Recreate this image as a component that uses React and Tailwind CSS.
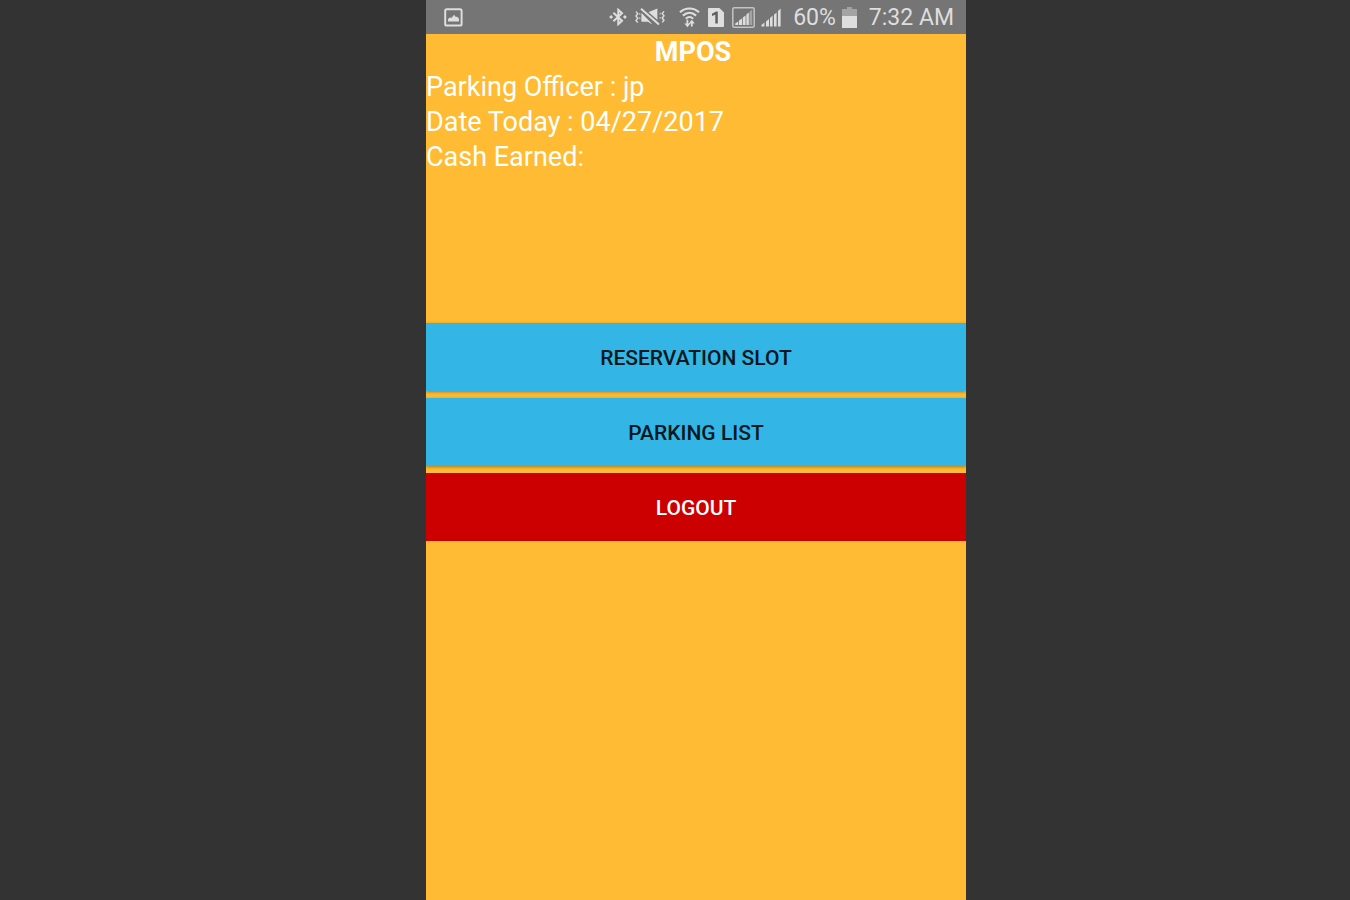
function PictureIcon() {
  return (
    <svg className="h-[19px] w-[19px]" viewBox="0 0 19 19" fill="none" aria-hidden="true">
      <rect x="1.2" y="1.2" width="16.4" height="16.4" rx="1.6" stroke="#dedede" strokeWidth="2" />
      <path d="M4 13.6V11l2.2-1.7 1.2.7 2.7-3.2 1.9 2.4 1-.6 2 2.2v2.8z" fill="#dedede" />
    </svg>
  );
}

function BluetoothIcon() {
  return (
    <svg className="h-[18px] w-[18px]" viewBox="0 0 18 18" fill="none" stroke="#dedede" strokeWidth="2" aria-hidden="true">
      <path d="M4.4 4.8 13 12.8 9.3 16.2V1.8L13 5.2 4.4 13.2" />
      <path d="M.2 9 2.1 7.1 4 9 2.1 10.9zM14 9l1.9-1.9L17.8 9l-1.9 1.9z" fill="#dedede" stroke="none" />
    </svg>
  );
}

function MuteVibrateIcon() {
  return (
    <svg className="h-[18px] w-[30px]" viewBox="0 0 30 18" fill="none" aria-hidden="true">
      <path d="M1 3.6 2.8 5.8 1 8l1.8 2.2L1 12.4l1.8 2.2M29 3.4l-1.8 2.2L29 7.8 27.2 10l1.8 2.2-1.8 2.2" stroke="#dedede" strokeWidth="1.4" />
      <path d="M4.8 5.2v1.6M4.8 9.4V11M25.2 4.8v1.6M25.2 9v1.6" stroke="#dedede" strokeWidth="1" />
      <path d="M6.6 5v8.6h6.2l4.6 2.8z" fill="#dedede" />
      <path d="M12 4.8 22.4.4v12.8z" fill="#dedede" />
      <path d="M7.2 1 24 15.6" stroke="#757575" strokeWidth="3.6" />
      <path d="M6 .8 24 16.6" stroke="#dedede" strokeWidth="2" />
      <path d="M6.6 5.6v8h6.2l4.4 2.6z" fill="#dedede" />
    </svg>
  );
}

function WifiIcon() {
  return (
    <svg className="h-[21px] w-[21px]" viewBox="0 0 21 21" fill="none" stroke="#dedede" aria-hidden="true">
      <path d="M1 5.2c5.6-5 13.4-5 19 0M3.9 8.6c4-3.6 9.2-3.6 13.2 0M6.8 11.7c2.3-2.1 5.1-2.1 7.4 0" strokeWidth="2.1" />
      <path d="M8.4 12.8v5M12.8 19.6v-5" strokeWidth="1.8" />
      <path d="M5.4 16.4h6l-3 3.8zM9.8 16.6h6l-3-3.8z" fill="#dedede" stroke="none" />
    </svg>
  );
}

function SimIcon() {
  return (
    <svg className="h-[19px] w-[16px]" viewBox="0 0 16 19" aria-hidden="true">
      <path d="M1 0h10.4L16 4.6V18a1 1 0 0 1-1 1H1a1 1 0 0 1-1-1V1a1 1 0 0 1 1-1z" fill="#dedede" />
      <path d="M4 5.7 8 3.5h1.8v11.9H7.3V6.8L4 8z" fill="#606060" />
    </svg>
  );
}

function BoxedSignalIcon() {
  return (
    <svg className="h-[21px] w-[23px]" viewBox="0 0 23 21" fill="none" aria-hidden="true">
      <rect x=".8" y=".8" width="21.4" height="19.4" rx="1.5" stroke="#c4c4c4" strokeWidth="1.5" />
      <path d="M3.2 18v-1.4l3-2V18zM7 18v-4.6l3-2V18zM10.8 18v-7.4l2.8-2.2V18zM14.4 18V7.6l2.4-2V18z" fill="#dedede" />
      <path d="M17.4 18V4.8l2.8-2.2V18z" fill="#a3a3a3" />
    </svg>
  );
}

function SignalIcon() {
  return (
    <svg className="h-[19px] w-[20px]" viewBox="0 0 20 19" fill="#dedede" aria-hidden="true">
      <path d="M.4 18.4V17l3-2.4v3.8zM5 18.4v-5l3-2.4v7.4zM9 18.4V10l2.6-2.4v10.8zM13 18.4V6.8l2.6-2.4v14zM17 18.4V3l2.6-2.6v18z" />
    </svg>
  );
}

function BatteryIcon() {
  return (
    <svg className="h-[21px] w-[15px]" viewBox="0 0 15 21" aria-hidden="true">
      <path d="M5 0h5v2h5v7H0V2h5z" fill="#a3a3a3" />
      <path d="M0 9h15v12H0z" fill="#dedede" />
    </svg>
  );
}

function StatusBar() {
  return (
    <header className="flex h-[34px] items-center bg-[#757575] pr-3 pl-[18px] text-[23px] leading-8 text-[#dedede]">
      <PictureIcon />
      <div className="ml-auto flex items-center">
        <div className="flex items-center gap-2">
          <BluetoothIcon />
          <MuteVibrateIcon />
        </div>
        <div className="ml-3.5 flex items-center gap-2">
          <WifiIcon />
          <SimIcon />
          <BoxedSignalIcon />
        </div>
        <div className="ml-1.5 flex items-center">
          <SignalIcon />
        </div>
        <span className="ml-3 pt-0.5">60%</span>
        <div className="ml-1.5 flex items-center">
          <BatteryIcon />
        </div>
        <time className="ml-3 pt-0.5">7:32 AM</time>
      </div>
    </header>
  );
}

const actions = [
  { label: "RESERVATION SLOT", style: "bg-[#33b5e5] text-[#07181e]" },
  { label: "PARKING LIST", style: "bg-[#33b5e5] text-[#07181e]" },
  { label: "LOGOUT", style: "bg-[#cc0000] text-white" },
];

export default function App() {
  return (
    <div className="grid min-h-screen grid-cols-[426fr_minmax(auto,540px)_384fr] bg-[#333333] font-[Roboto,sans-serif]">
      <div className="col-start-2 overflow-hidden bg-[#ffbb33]">
        <StatusBar />
        <main>
          <section className="pt-px text-[27px] leading-[35px] text-white">
            <h1 className="pr-1.5 text-center font-bold">MPOS</h1>
            <p>Parking Officer : jp</p>
            <p>Date Today : 04/27/2017</p>
            <p>Cash Earned:</p>
          </section>
          <nav className="mt-[148px] flex flex-col gap-[7px]">
            {actions.map(({ label, style }) => (
              <button
                key={label}
                type="button"
                className={`h-[68px] w-full pt-[3px] text-[21px] font-medium shadow-[0_1px_3px_rgba(0,0,0,0.35)] last:shadow-none ${style}`}
              >
                {label}
              </button>
            ))}
          </nav>
        </main>
      </div>
    </div>
  );
}
